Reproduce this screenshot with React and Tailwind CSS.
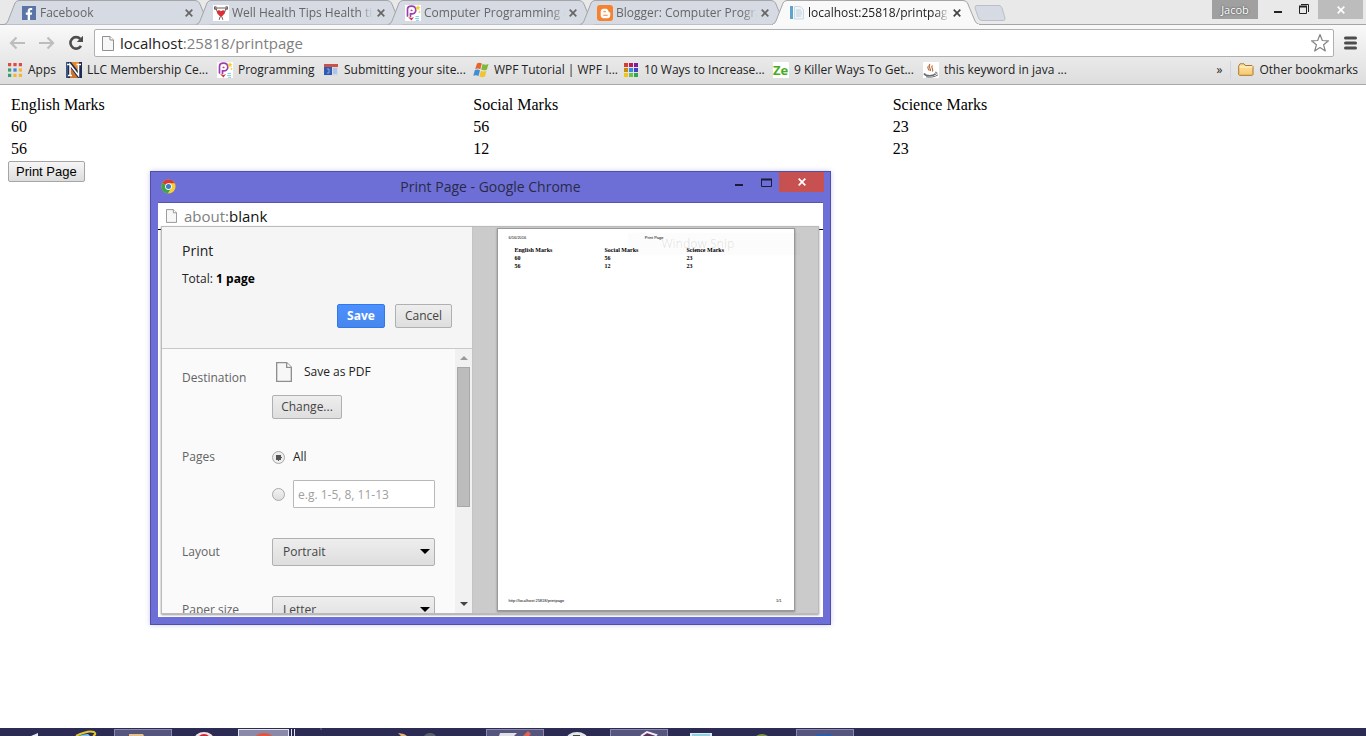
import { useState } from 'react';
import clsx from 'clsx';
import { FaFacebookF, FaBloggerB } from 'react-icons/fa';

const PIcon = () => (
  <svg viewBox="0 0 16 16" className="w-4 h-4 shrink-0">
    <rect width="16" height="16" fill="#fff" />
    <path d="M2.500 11V4.500C2.500 2.200 4.500 1.200 6.500 1.200C9.500 1.200 10.800 3.200 10.800 5.300C10.800 8 8.500 9.300 5.500 8.800V11.500" fill="none" stroke="#9b3fae" strokeWidth="1.700" strokeLinecap="round" />
    <path d="M5.300 5.500Q6.500 3.500 7.800 5.500Q6.500 7.200 5.300 5.500z" fill="#c2478f" />
    <path d="M3 12l3.500 3.500L9 12l-2.500 1z" fill="#d8343a" />
    <path d="M10.500 11.500h3.500M10 13.500h4M11 15.300h3" stroke="#7fd3e2" strokeWidth="1" />
    <path d="M13 0l.8 1.700 1.900.3-1.400 1.300.3 2L13 4.300l-1.700 1 .3-2L10.300 2l1.900-.3z" fill="#f8cf3b" />
    <circle cx="14.500" cy="7" r=".9" fill="#f8cf3b" />
  </svg>
);

const FacebookIcon = () => (
  <span className="flex items-end justify-center w-[14px] h-[14px] shrink-0 bg-[#5b74a8]">
    <FaFacebookF className="w-3 h-3 text-white" />
  </span>
);

const HealthIcon = () => (
  <svg viewBox="0 0 16 16" className="w-4 h-4 shrink-0">
    <rect width="16" height="16" fill="#fff" />
    <path d="M1.500 1.500v3M2.800 1v4M14.500 1.500v3M13.200 1v4M3 3h10" stroke="#5a4a48" strokeWidth=".9" />
    <path d="M3 3.500l1.500 4M13 3.500l-1.500 4" stroke="#5a4a48" strokeWidth=".9" />
    <path d="M8 12.500L4.300 8.500C2.800 6 5.800 4 8 6.300C10.200 4 13.200 6 11.700 8.500z" fill="#d92f35" />
    <path d="M7 12l-.8 2.800M9 12l.8 2.800" stroke="#5a4a48" strokeWidth=".9" />
  </svg>
);

const BloggerIcon = () => (
  <span className="flex items-center justify-center w-4 h-4 shrink-0 rounded-[3px] bg-[#f48231]">
    <FaBloggerB className="w-[11px] h-[11px] text-white" />
  </span>
);

const NotebookIcon = () => (
  <svg viewBox="0 0 16 16" className="w-4 h-4 shrink-0">
    <path d="M1 1h3v13H1z" fill="#5fa3cf" />
    <path d="M5.500 1.500h6l3 3V14h-9z" fill="#eef4f8" stroke="#c3d2dc" strokeWidth=".8" />
    <path d="M7 5h5M7 7h6M7 9h6M7 11h5" stroke="#b4c6d2" strokeWidth=".8" />
  </svg>
);

const PageIcon = ({ className }) => (
  <svg viewBox="0 0 12 15" className={clsx('shrink-0', className)}>
    <path d="M.5.5h7.500l3.500 3.500v10.500H.5z" fill="#f7f7f7" stroke="#8f8f8f" />
    <path d="M8 .5V4h3.500" fill="#fff" stroke="#8f8f8f" />
  </svg>
);

const AppsIcon = () => (
  <svg viewBox="0 0 13 13" className="w-[14px] h-[14px] shrink-0">
    {['#dd4b3e', '#dd4b3e', '#dd4b3e', '#34a269', '#4a80d8', '#f2b632', '#34a269', '#f2b632', '#f2b632'].map((c, i) => (
      <rect key={i} x={(i % 3) * 5} y={Math.floor(i / 3) * 5} width="3" height="3" fill={c} />
    ))}
  </svg>
);

const GridIcon = () => (
  <svg viewBox="0 0 14 14" className="w-[14px] h-[14px] shrink-0">
    {['#d43f2f', '#c2185b', '#7b1fa2', '#c98a13', '#2f8fe8', '#4a3fc0', '#f0c419', '#6cc24a', '#2fa84f'].map((c, i) => (
      <rect key={i} x={(i % 3) * 5} y={Math.floor(i / 3) * 5} width="4" height="4" fill={c} />
    ))}
  </svg>
);

const LlcIcon = () => (
  <svg viewBox="0 0 16 16" className="w-4 h-4 shrink-0">
    <rect width="16" height="16" fill="#1d2b53" />
    <path d="M5 0h8v10z" fill="#e58a2c" />
    <path d="M4 5l8 11H4z" fill="#c9772c" />
    <path d="M0 0h2v16H0z" fill="#3a5580" />
    <path d="M4 13.500V2.500l8.500 11V2.500M1 2.500h3M10.500 2.500h4.500M2 13.500h4" fill="none" stroke="#fff" strokeWidth="1.500" />
  </svg>
);

const SubmitIcon = () => (
  <svg viewBox="0 0 14 12" className="w-[14px] h-3 shrink-0">
    <rect width="14" height="12" fill="#d4dae6" />
    <rect width="14" height="3" fill="#c9524b" />
    <rect y="3" width="8" height="8" fill="#2f5bb0" />
    <path d="M3 5h2v4H3M9 5h4M9 7h4M9 9h4" fill="none" stroke="#8fa9dc" />
  </svg>
);

const WindowsIcon = () => (
  <svg viewBox="0 0 16 16" className="w-4 h-4 shrink-0">
    <path d="M4 1.500Q6.500 0 8.800 1.600L7.300 7.200Q4.700 5.700 2.200 7z" fill="#e8652b" />
    <path d="M9.600 2Q12.500 3.500 15.500 2L13.800 7.700Q11 9 8.200 7.600z" fill="#7fb83c" />
    <path d="M1.900 8Q4.500 6.800 7 8.300L5.500 14Q3 12.500.3 13.800z" fill="#3d8fd6" />
    <path d="M7.900 8.700Q10.700 10 13.500 8.800L12 14.500Q9 16 6.400 14.400z" fill="#f4c430" />
  </svg>
);

const JavaIcon = () => (
  <svg viewBox="0 0 16 16" className="w-4 h-4 shrink-0">
    <rect width="16" height="16" fill="#fff" />
    <path d="M7 2c-3 3 2 4 0 7M9.500 3.500c-2.500 2 1.500 3 0 6M5 4.500c-1 2 1 2.500 1 4" fill="none" stroke="#b8622d" strokeWidth="1.100" />
    <path d="M1 11.500c2 3.200 9 3 11.500.3" fill="none" stroke="#6b6b70" strokeWidth="1.500" />
    <path d="M3 14.800c4 .8 9 .3 12-2" fill="none" stroke="#6b6b70" />
    <path d="M12 10.300c3-.5 2.500 2-.5 2.200" fill="none" stroke="#6b6b70" />
  </svg>
);

const ZeIcon = () => (
  <span className="w-4 h-4 shrink-0 overflow-hidden bg-white font-bold text-[13px] leading-4 text-[#48ad1c]">Ze</span>
);

const FolderIcon = () => (
  <svg viewBox="0 0 16 13" className="w-4 h-[13px] shrink-0">
    <defs>
      <linearGradient id="folder" x2="0" y2="1">
        <stop offset="0" stopColor="#ffe6a8" />
        <stop offset="1" stopColor="#f8c66b" />
      </linearGradient>
    </defs>
    <path d="M.7 11.500V3L2 .8h4L7.200 2.500H14l1 1v8l-.7.8H1.400z" fill="url(#folder)" stroke="#a9772f" />
    <path d="M1.500 4H14.500" stroke="#fff3cf" />
  </svg>
);

const ChromeIcon = () => (
  <svg viewBox="0 0 16 16" className="w-[15px] h-[15px] shrink-0">
    <circle cx="8" cy="8" r="7.500" fill="#f8cf2f" />
    <path d="M8 8L1.500 4.200A7.500 7.500 0 0 1 14.700 4.600H8z" fill="#d93a30" />
    <path d="M8 8L1.500 4.200A7.500 7.500 0 0 0 7.200 15.500L10.500 10z" fill="#3fa447" />
    <circle cx="8" cy="8" r="3.600" fill="#fff" />
    <circle cx="8" cy="8" r="2.700" fill="#3b7bd0" />
  </svg>
);

const CloseIcon = ({ className }) => (
  <svg viewBox="0 0 8 8" className={clsx('w-2 h-2', className)}>
    <path d="M.7.7l6.600 6.600M7.300.7L.7 7.300" stroke="currentColor" strokeWidth="1.700" />
  </svg>
);

const Caret = () => (
  <svg viewBox="0 0 10 5" className="w-[10px] h-[5px] shrink-0">
    <path d="M0 0h10L5 5z" fill="currentColor" />
  </svg>
);

const SmallCaret = ({ className }) => (
  <svg viewBox="0 0 8 4" className={clsx('w-2 h-1 shrink-0', className)}>
    <path d="M0 0h8L4 4z" fill="currentColor" />
  </svg>
);

const tabs = [
  { title: 'Facebook', icon: <FacebookIcon /> },
  { title: 'Well Health Tips Health ti', icon: <HealthIcon /> },
  { title: 'Computer Programming c', icon: <PIcon /> },
  { title: 'Blogger: Computer Progra', icon: <BloggerIcon /> },
  { title: 'localhost:25818/printpage', icon: <NotebookIcon />, active: true },
];

const bookmarks = [
  { title: 'Apps', icon: <AppsIcon />, width: 'w-[59px]' },
  { title: 'LLC Membership Ce...', icon: <LlcIcon />, width: 'w-[151px]' },
  { title: 'Programming', icon: <PIcon />, width: 'w-[106px]' },
  { title: 'Submitting your site...', icon: <SubmitIcon />, width: 'w-[150px]' },
  { title: 'WPF Tutorial | WPF I...', icon: <WindowsIcon />, width: 'w-[150px]' },
  { title: '10 Ways to Increase...', icon: <GridIcon />, width: 'w-[150px]' },
  { title: '9 Killer Ways To Get...', icon: <ZeIcon />, width: 'w-[150px]' },
  { title: 'this keyword in java ...', icon: <JavaIcon />, width: 'w-[150px]' },
];

const marks = [
  ['60', '56', '23'],
  ['56', '12', '23'],
];

function Tab({ title, icon, active }) {
  return (
    <div className={clsx('relative w-[208px] h-[25px] -mr-4 shrink-0', active && 'z-10')}>
      <svg viewBox="0 0 208 25" className="absolute inset-0 w-full h-full">
        <path
          d="M0 24.500Q2.500 24.500 4 21L11 3Q12.500.5 15 .5H191Q194 .5 195.500 3L203 21Q204.500 24.500 208 24.500"
          fill={active ? '#f9f9f9' : '#d5dae3'}
          stroke="#a3a5a8"
        />
        {active && <path d="M1 24.500H207" stroke="#f9f9f9" />}
      </svg>
      <div className="relative flex items-center h-full pl-[17px] pr-[19px] pt-px">
        <span className="flex justify-center w-4">{icon}</span>
        <span
          className={clsx(
            'ml-[3px] flex-1 overflow-hidden whitespace-nowrap text-[12px] mask-r-from-90%',
            active ? 'text-[#222]' : 'text-[#666]'
          )}
        >
          {title}
        </span>
        <button aria-label={`Close ${title}`} className={clsx('ml-1', active ? 'text-[#444]' : 'text-[#666]')}>
          <CloseIcon />
        </button>
      </div>
    </div>
  );
}

function TabStrip() {
  return (
    <div className="flex items-start h-[25px] pl-[4px] bg-[#e9e9e9] border-b border-[#a3a5a8]">
      {tabs.map((tab) => (
        <Tab key={tab.title} {...tab} />
      ))}
      <button aria-label="New tab" className="ml-[10px] mt-[5px]">
        <svg viewBox="0 0 32 16" className="w-8 h-4">
          <path d="M3 .5H25Q27 .5 28 3L31 13Q31.500 15.500 29 15.500H8Q5.500 15.500 4.500 13L1 3Q.5.5 3 .5z" fill="#d5dae3" stroke="#bcbfc5" />
        </svg>
      </button>
      <div className="flex ml-auto pr-[3px]">
        <button className="w-[46px] h-[19px] mr-4 bg-[#a0a0a0] text-[11px] leading-[18px] text-white [text-shadow:0_0_2px_#333]">Jacob</button>
        <button aria-label="Minimize" className="w-[9px] mr-4">
          <svg viewBox="0 0 9 19" className="w-[9px] h-[19px]">
            <path d="M0 12h8" stroke="#222" strokeWidth="2" />
          </svg>
        </button>
        <button aria-label="Restore" className="w-[11px] mr-2">
          <svg viewBox="0 0 11 19" className="w-[11px] h-[19px]" fill="none" stroke="#222">
            <path d="M2 4.500h7.500v7.500" />
            <path d="M.5 6.500h7v7h-7z" />
            <path d="M0 6.500h8" strokeWidth="2" />
          </svg>
        </button>
        <button aria-label="Close" className="flex items-center justify-center w-[45px] h-[19px] bg-[#bcbcbc] text-white">
          <CloseIcon />
        </button>
      </div>
    </div>
  );
}

function Toolbar() {
  return (
    <div className="flex items-center h-8 pt-1 pl-2 pr-[9px]">
      <button aria-label="Back" className="mr-3">
        <svg viewBox="0 0 18 14" className="w-[18px] h-[14px]" fill="none" stroke="#bdbdbd" strokeWidth="2.200">
          <path d="M17 7H3M8.500 1.500L3 7l5.500 5.500" />
        </svg>
      </button>
      <button aria-label="Forward" className="mr-3">
        <svg viewBox="0 0 18 14" className="w-[18px] h-[14px]" fill="none" stroke="#bdbdbd" strokeWidth="2.200">
          <path d="M1 7h14M9.500 1.500L15 7l-5.500 5.500" />
        </svg>
      </button>
      <button aria-label="Reload">
        <svg viewBox="0 0 16 16" className="w-4 h-4">
          <path d="M13 10.800A5.700 5.700 0 1 1 12.300 4" fill="none" stroke="#4d4d4d" strokeWidth="2.600" />
          <path d="M15 .8V7H8.800z" fill="#4d4d4d" />
        </svg>
      </button>
      <div className="flex items-center flex-1 h-7 ml-[10px] px-[7px] rounded-[2px] border border-[#b0b0b0] bg-white">
        <PageIcon className="w-3 h-[15px]" />
        <a href="#page" className="ml-[6px] text-[15px] leading-5 text-[#808080]">
          <span className="text-[#222]">localhost</span>:25818/printpage
        </a>
        <button aria-label="Bookmark this page" className="ml-auto -mr-1">
          <svg viewBox="0 0 20 20" className="w-5 h-5">
            <path d="M10 1.500l2.300 6 6.200.3-4.900 4 1.700 6.200-5.300-3.500L4.700 18l1.700-6.200-4.900-4 6.200-.3z" fill="#fff" stroke="#858585" strokeWidth="1.200" strokeLinejoin="round" />
          </svg>
        </button>
      </div>
      <button aria-label="Menu" className="ml-[10px]">
        <svg viewBox="0 0 13 14" className="w-[13px] h-[14px]">
          <path d="M1.500 2h10M1.500 7h10M1.500 12h10" stroke="#4d4d4d" strokeWidth="3" strokeLinecap="round" />
        </svg>
      </button>
    </div>
  );
}

function BookmarksBar() {
  return (
    <div className="flex items-center h-[27px] pl-[7px] pr-2 pb-[2px] text-[12px] text-[#222] whitespace-nowrap">
      {bookmarks.map((b) => (
        <a key={b.title} href="#bookmark" className={clsx('flex items-center gap-[5px] shrink-0', b.width)}>
          <span className="flex justify-center w-4">{b.icon}</span>
          {b.title}
        </a>
      ))}
      <button aria-label="More bookmarks" className="ml-auto mr-2">»</button>
      <a href="#bookmarks" className="flex items-center gap-[5px] pl-[7px] border-l border-[#cdd5e0]">
        <FolderIcon />
        Other bookmarks
      </a>
    </div>
  );
}

function MarksPage() {
  return (
    <div id="page" className="p-2 font-['Liberation_Serif',serif] text-[16px] leading-[18px] text-black">
      <table className="w-full table-fixed border-separate border-spacing-[2px] text-left">
        <thead>
          <tr>
            <th className="w-[34.3%] p-px font-normal">English Marks</th>
            <th className="w-[31.1%] p-px font-normal">Social Marks</th>
            <th className="p-px font-normal">Science Marks</th>
          </tr>
        </thead>
        <tbody>
          {marks.map((row, i) => (
            <tr key={i}>
              {row.map((mark, j) => (
                <td key={j} className="p-px">{mark}</td>
              ))}
            </tr>
          ))}
        </tbody>
      </table>
      <button className="block h-[21px] px-[7px] rounded-[2px] border border-[#a5a5a5] bg-linear-to-b from-[#f6f6f6] to-[#dddddd] font-['Liberation_Sans',sans-serif] text-[13px] leading-[18px]">
        Print Page
      </button>
    </div>
  );
}

const buttonStyle =
  'rounded-[2px] border border-[#b0b0b0] bg-linear-to-b from-[#eeeeee] to-[#dedede] text-[12px] text-[#444]';

function SettingSelect({ id, label, options }) {
  return (
    <div className="flex items-center">
      <label htmlFor={id} className="w-[90px] text-[#646464]">{label}</label>
      <div className="relative flex-1">
        <select id={id} className={clsx('block w-full h-7 pl-[10px] appearance-none', buttonStyle)}>
          {options.map((o) => (
            <option key={o}>{o}</option>
          ))}
        </select>
        <span className="absolute right-[5px] top-[11px] text-black pointer-events-none">
          <Caret />
        </span>
      </div>
    </div>
  );
}

function PrintSettings() {
  const [pages, setPages] = useState('all');
  const radioStyle =
    'w-[13px] h-[13px] shrink-0 appearance-none rounded-full border border-[#a8a8a8] bg-linear-to-b from-[#f2f2f2] to-[#dedede] checked:bg-[radial-gradient(circle,#555_0_3px,#eee_3px)]';

  return (
    <div className="flex flex-col w-[311px] shrink-0 border-r border-[#c4c4c4] bg-[#fafafa] text-[12px] text-[#222]">
      <div className="h-[122px] shrink-0 px-5 pt-[14px] bg-[#f5f5f5] border-b border-[#c8c8c8]">
        <h1 className="text-[14px] leading-5">Print</h1>
        <p className="mt-[9px] leading-[18px]">
          Total: <b className="text-black">1 page</b>
        </p>
        <div className="flex justify-end gap-[10px] mt-4">
          <button className="w-12 h-6 rounded-[2px] border border-[#3079ed] bg-linear-to-b from-[#4d90fe] to-[#4787ed] text-[12px] font-bold text-white">
            Save
          </button>
          <button className={clsx('w-[57px] h-6', buttonStyle)}>Cancel</button>
        </div>
      </div>
      <div className="flex flex-1 min-h-0">
        <div className="flex-1 pl-5 pr-5 pt-[11px] overflow-hidden">
          <div className="flex">
            <span className="w-[90px] pt-[9px] leading-[18px] text-[#646464]">Destination</span>
            <div>
              <div className="flex items-center gap-3 pl-1">
                <PageIcon className="w-4 h-5" />
                <span className="leading-6">Save as PDF</span>
              </div>
              <button className={clsx('w-[70px] h-6 mt-[11px]', buttonStyle)}>Change...</button>
            </div>
          </div>
          <fieldset className="flex mt-7">
            <legend className="float-left w-[90px] leading-5 text-[#646464]">Pages</legend>
            <div className="flex-1 min-w-0">
              <label className="flex items-center gap-2 leading-5">
                <input type="radio" name="pages" className={radioStyle} checked={pages === 'all'} onChange={() => setPages('all')} />
                All
              </label>
              <div className="flex items-center gap-2 mt-[13px]">
                <input type="radio" name="pages" aria-label="Page range" className={radioStyle} checked={pages === 'range'} onChange={() => setPages('range')} />
                <input
                  type="text"
                  aria-label="Pages to print"
                  placeholder="e.g. 1-5, 8, 11-13"
                  className="w-full min-w-0 h-7 px-1 border border-[#b8b8b8] rounded-[1px] bg-white placeholder:text-[#a0a0a0]"
                />
              </div>
            </div>
          </fieldset>
          <div className="mt-[30px]">
            <SettingSelect id="layout" label="Layout" options={['Portrait', 'Landscape']} />
          </div>
          <div className="mt-[30px]">
            <SettingSelect id="paper" label="Paper size" options={['Letter', 'Legal', 'A4']} />
          </div>
        </div>
        {/* Scrollbar */}
        <div className="flex flex-col items-center w-[17px] py-[7px] bg-[#f1f1f1] text-[#444]">
          <SmallCaret className="mb-[7px] rotate-180 text-[#9a9a9a]" />
          <div className="w-[13px] h-[140px] border border-[#a8a8a8] bg-[#bcbcbc]" />
          <SmallCaret className="mt-auto" />
        </div>
      </div>
    </div>
  );
}

function PrintPreview() {
  return (
    <div className="flex flex-1 justify-center bg-[#cbcbcb] pt-px pb-[2px]">
      <div className="relative flex flex-col w-[298px] px-[11px] pt-[5px] pb-[5px] border border-[#999] bg-white shadow-[0_1px_2px_#888] text-black">
        <div className="absolute left-[130px] top-1 w-[172px] h-[22px] pl-[34px] bg-black/1 text-[12px] leading-[22px] text-black/10">
          Window Snip
        </div>
        <div className="grid grid-cols-3 font-['Liberation_Sans',sans-serif] text-[4px] leading-[8px]">
          <span>6/16/2016</span>
          <span className="pl-[45px]">Print Page</span>
        </div>
        <table className="mt-1 ml-[6px] table-fixed text-left font-['Liberation_Serif',serif] text-[6px] leading-[8px]">
          <thead>
            <tr>
              <th className="w-[90px]">English Marks</th>
              <th className="w-[82px]">Social Marks</th>
              <th>Science Marks</th>
            </tr>
          </thead>
          <tbody className="font-bold">
            {marks.map((row, i) => (
              <tr key={i}>
                {row.map((mark, j) => (
                  <td key={j}>{mark}</td>
                ))}
              </tr>
            ))}
          </tbody>
        </table>
        <div className="flex justify-between mt-auto pr-[1px] font-['Liberation_Sans',sans-serif] text-[4px] leading-[8px]">
          <span>http://localhost:25818/printpage</span>
          <span>1/1</span>
        </div>
      </div>
    </div>
  );
}

function PrintWindow() {
  return (
    <div className="absolute left-[150px] top-[171px] flex flex-col w-[681px] h-[454px] px-[7px] pb-[7px] border border-[#504fa5] bg-[#6d6fd6] shadow-[0_0_5px_#c9c9f0]">
      <div className="relative flex items-start h-[30px] shrink-0">
        <span className="mt-[7px] ml-[3px]">
          <ChromeIcon />
        </span>
        <h2 className="absolute inset-x-0 top-[5px] text-center text-[14px] leading-5 text-[#2a2a48]">Print Page - Google Chrome</h2>
        <div className="relative flex ml-auto -mr-px">
          <button aria-label="Minimize" className="mr-[17px]">
            <svg viewBox="0 0 9 20" className="w-[9px] h-5"><path d="M0 13h8" stroke="#1c1c38" strokeWidth="2" /></svg>
          </button>
          <button aria-label="Maximize" className="mr-[7px]">
            <svg viewBox="0 0 11 20" className="w-[11px] h-5">
              <path d="M.5 7.500h10v7H.5z" fill="none" stroke="#1c1c38" />
              <path d="M0 7.500h11" stroke="#1c1c38" strokeWidth="2" />
            </svg>
          </button>
          <button aria-label="Close window" className="flex items-center justify-center w-[45px] h-5 bg-[#c75050] text-white">
            <CloseIcon />
          </button>
        </div>
      </div>
      <div className="flex flex-col flex-1 min-h-0 border-t border-[#5755ac] bg-white">
        <div className="flex items-center h-[27px] shrink-0 pl-2 pb-px border-b border-black">
          <PageIcon className="w-[11px] h-[14px]" />
          <span className="ml-[7px] text-[15px] leading-5 text-[#808080]">
            about:<span className="text-[#111]">blank</span>
          </span>
        </div>
        <div className="relative flex flex-1 min-h-0 ml-[3px] mr-1 -mt-1 mb-[3px] border border-[#bbb] overflow-hidden bg-[#cbcbcb] shadow-[0_1px_2px_#999]">
          <PrintSettings />
          <PrintPreview />
        </div>
      </div>
    </div>
  );
}

const taskIcons = [
  { name: 'Start', art: <path d="M41 8l7-3v3z" fill="#e8eef8" /> },
  { name: 'Internet Explorer', art: <><path d="M24 8Q36 2 42 4Q45 6 41 8" fill="none" stroke="#e6c92c" strokeWidth="2" /><path d="M26 8q6-2 10-2l2 2z" fill="#7cc4ea" /></> },
  { name: 'File Explorer', open: true, art: <path d="M15 6h14l1 2H15z" fill="#e3c38a" /> },
  { name: 'Opera', art: <><ellipse cx="28" cy="12" rx="10" ry="8" fill="#f4e4e6" /><ellipse cx="28" cy="13" rx="7" ry="7" fill="#c9283a" /></> },
  { name: 'Chrome', open: true, stacked: true, art: <ellipse cx="26" cy="12" rx="10" ry="7" fill="#e2553f" /> },
  { name: 'Recorder', art: <circle cx="21" cy="1" r="1" fill="#59597f" /> },
  { name: 'Paint', art: <path d="M36 5l6 1 3 2h-6z" fill="#e8b378" /> },
  { name: 'Camera', art: <ellipse cx="6" cy="9" rx="6" ry="4" fill="#5c6068" /> },
  { name: 'Snipping Tool', open: true, art: <><path d="M14 5h17l-3 3H13z" fill="#dfe1e6" /><path d="M37 8l5-5 3 3-2 2z" fill="#e06452" /></> },
  { name: 'Clock', art: <><ellipse cx="29" cy="12" rx="11" ry="8" fill="#e4e6e8" /><path d="M25 8h7" stroke="#444" strokeWidth="2" /></> },
  { name: 'Visual Studio', open: true, art: <path d="M31 8l6-4 9 3-1 1" fill="#57305f" stroke="#f3eef5" strokeWidth="2" /> },
  { name: 'Notepad', art: <><path d="M18 5h22v3H18z" fill="#d6eef8" /><path d="M20 7h18" stroke="#5badc9" /></> },
  { name: 'Android', art: <path d="M22 8q6-4 12 0z" fill="#82934a" /> },
  { name: 'Word', open: true, art: <path d="M20 6h12l3-1v3H20z" fill="#2b5da8" /> },
];

function Taskbar() {
  return (
    <nav className="h-2 shrink-0 overflow-hidden pt-px bg-[#2c2b53]">
      <div className="flex gap-1 -ml-[10px]">
        {taskIcons.map((t) => (
          <button
            key={t.name}
            aria-label={t.name}
            className={clsx(
              'relative w-[58px] h-10 shrink-0 border border-b-0',
              !t.open && 'border-transparent',
              t.open && !t.stacked && 'border-[#8a89ab] bg-[#56557d]',
              t.stacked && 'border-[#e4e4ee] bg-[#8a89a8]'
            )}
          >
            <svg viewBox="0 0 58 8" className="absolute -left-px -top-[2px] w-[58px] h-2">
              {t.art}
              {t.stacked && (
                <>
                  <path d="M50 1h8v7h-8z" fill="#2c2b53" />
                  <path d="M50.500 1v7M53.500 1v7M56.500 1v7" stroke="#e4e4ee" />
                </>
              )}
            </svg>
          </button>
        ))}
      </div>
    </nav>
  );
}

export default function App() {
  return (
    <div className="relative flex flex-col min-h-screen bg-white font-['Open_Sans','Noto_Sans',sans-serif]">
      <header>
        <TabStrip />
        <div className="border-b border-[#a8a8a8] bg-linear-to-b from-[#f9f9f9] to-[#dddddd]">
          <Toolbar />
          <BookmarksBar />
        </div>
      </header>
      <main className="flex-1">
        <MarksPage />
      </main>
      <PrintWindow />
      <Taskbar />
    </div>
  );
}
